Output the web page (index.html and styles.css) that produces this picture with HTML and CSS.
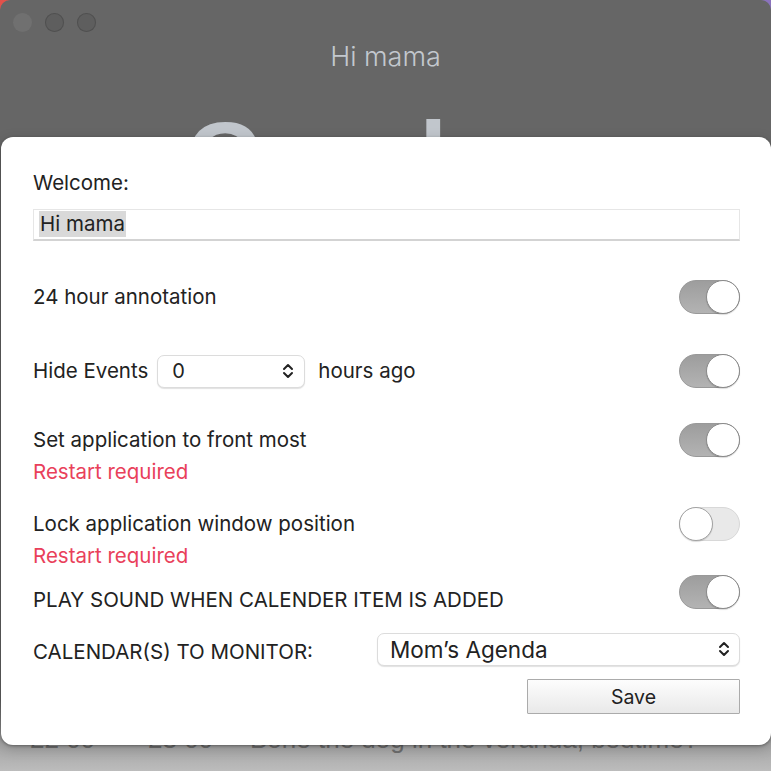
FILE: index.html
```html
<!DOCTYPE html>
<html lang="en">
<head>
  <meta charset="UTF-8">
  <meta name="viewport" content="width=device-width, initial-scale=1.0">
  <title>Hi mama</title>
  <link rel="stylesheet" href="styles.css">
</head>
<body>
  <div class="window">
    <div class="titlebar">
      <span class="light first"></span>
      <span class="light"></span>
      <span class="light"></span>
    </div>
    <div class="title">Hi mama</div>
    <div class="greeting">Good</div>

    <div class="events">
      <div class="event">
        <span class="event-from">22 00</span>
        <span class="event-to">23 00</span>
        <span class="event-name">Bone the dog in the veranda, bedtime?</span>
      </div>
    </div>

    <!-- settings sheet -->
    <div class="sheet">
      <div class="label">Welcome:</div>
      <div class="text-field"><span class="selected">Hi mama</span></div>

      <div class="row first-row">
        <span class="label">24 hour annotation</span>
        <span class="toggle on"><span class="knob"></span></span>
      </div>

      <div class="row hide-row">
        <div class="inline">
          <span class="label">Hide Events</span>
          <div class="select small">
            <span>0</span>
            <svg class="chevrons" width="12" height="16" viewBox="0 0 12 16"><path d="M2 6 L6 2 L10 6 M2 10 L6 14 L10 10" fill="none" stroke="#222" stroke-width="2" stroke-linecap="round" stroke-linejoin="round"/></svg>
          </div>
          <span class="label">hours ago</span>
        </div>
        <span class="toggle on"><span class="knob"></span></span>
      </div>

      <div class="row front-row">
        <span class="label">Set application to front most</span>
        <span class="toggle on"><span class="knob"></span></span>
      </div>
      <div class="note">Restart required</div>

      <div class="row lock-row">
        <span class="label">Lock application window position</span>
        <span class="toggle"><span class="knob"></span></span>
      </div>
      <div class="note">Restart required</div>

      <div class="row sound-row">
        <span class="label">PLAY SOUND WHEN CALENDER ITEM IS ADDED</span>
        <span class="toggle on"><span class="knob"></span></span>
      </div>

      <div class="row calendar-row">
        <span class="label">CALENDAR(S) TO MONITOR:</span>
        <div class="select wide">
          <span>Mom’s Agenda</span>
          <svg class="chevrons" width="12" height="16" viewBox="0 0 12 16"><path d="M2 6 L6 2 L10 6 M2 10 L6 14 L10 10" fill="none" stroke="#222" stroke-width="2" stroke-linecap="round" stroke-linejoin="round"/></svg>
        </div>
      </div>

      <div class="actions">
        <button class="save" type="button">Save</button>
      </div>
    </div>
  </div>
</body>
</html>
```

FILE: styles.css
```css
/* page */
html, body {
  margin: 0;
  height: 100%;
}

body {
  background: linear-gradient(90deg, #e2514a, #8a73bd);
  font-family: Inter, "Liberation Sans", Arial, sans-serif;
  color: #222;
  overflow: hidden;
}

/* main window behind the sheet */
.window {
  position: relative;
  height: 771px;
  border-radius: 10px 10px 0 0;
  background: linear-gradient(#666 0, #666 700px, #a6a6a6 745px, #bcbcbc 771px);
  display: flex;
  flex-direction: column;
  overflow: hidden;
}

.titlebar {
  height: 44px;
  display: flex;
  align-items: center;
  gap: 13px;
  padding-left: 13px;
  box-sizing: border-box;
}

.light {
  width: 19px;
  height: 19px;
  border-radius: 50%;
  background: #5e5e5e;
  box-shadow: inset 0 0 0 1px #505050;
}

.light.first {
  background: #707070;
  box-shadow: none;
}

.title {
  text-align: center;
  font-size: 27px;
  line-height: 28px;
  margin-top: -1px;
  font-weight: 300;
  color: #c3c8ce;
}

/* big greeting, mostly under the sheet */
.greeting {
  margin-top: 36px;
  padding-left: 186px;
  font-family: "Liberation Sans", Arial, sans-serif;
  font-size: 100px;
  line-height: 100px;
  font-weight: 700;
  color: #c1c6cc;
  white-space: nowrap;
}

.events {
  margin-top: auto;
  padding: 0 0 17px 30px;
}

.event {
  display: flex;
  font-family: "Liberation Sans", Arial, sans-serif;
  font-size: 26px;
  line-height: 30px;
  color: #6e6e6e;
  white-space: nowrap;
}

.event-from { width: 118px; }
.event-to { width: 102px; }

/* sheet */
.sheet {
  position: absolute;
  top: 137px;
  left: 1px;
  right: 0;
  height: 608px;
  box-sizing: border-box;
  padding: 34px 31px 0 32px;
  background: #fff;
  border-radius: 12px;
  box-shadow: 0 1px 3px rgba(0, 0, 0, 0.35), 0 4px 14px rgba(0, 0, 0, 0.18);
}

.label {
  font-size: 20.5px;
  line-height: 24px;
  white-space: nowrap;
}

.text-field {
  margin-top: 14px;
  height: 32px;
  box-sizing: border-box;
  border: 1px solid #e6e6e6;
  border-bottom: 2px solid #d3d3d3;
  padding: 1px 0 0 5px;
  font-size: 20.5px;
  line-height: 26px;
}

.selected {
  background: #d9d9d9;
  padding: 0 1px;
  display: inline-block;
}

.row {
  display: flex;
  align-items: center;
  justify-content: space-between;
  min-height: 34px;
}

.first-row { margin-top: 39px; }
.hide-row { margin-top: 40px; }
.front-row { margin-top: 35px; }
.lock-row { margin-top: 23px; }
.sound-row {
  margin-top: 7px;
  align-items: flex-start;
}
.sound-row .label { padding-top: 13px; }
.calendar-row { margin-top: 20px; }
.calendar-row .label { padding-top: 5px; }

.inline {
  display: flex;
  align-items: center;
}

.note {
  margin-top: 3px;
  font-size: 20.5px;
  line-height: 24px;
  color: #e9405a;
}

/* toggles */
.toggle {
  position: relative;
  width: 61px;
  height: 34px;
  box-sizing: border-box;
  border-radius: 17px;
  background: #e9e9e9;
  border: 1px solid #d8d8d8;
  flex-shrink: 0;
}

.toggle.on {
  background: linear-gradient(#9d9d9d, #b3b3b3);
  border-color: #999;
}

.knob {
  position: absolute;
  top: -1px;
  left: -1px;
  width: 34px;
  height: 34px;
  box-sizing: border-box;
  border-radius: 50%;
  background: #fff;
  border: 1px solid #a2a2a2;
  box-shadow: 0 1px 1px rgba(0, 0, 0, 0.15);
}

.toggle.on .knob {
  left: auto;
  right: -1px;
  border-color: #8a8a8a;
}

/* popup buttons */
.select {
  display: flex;
  align-items: center;
  justify-content: space-between;
  box-sizing: border-box;
  height: 33px;
  border: 1px solid #dcdcdc;
  border-radius: 7px;
  background: #fff;
  box-shadow: 0 1px 1px rgba(0, 0, 0, 0.12);
  font-size: 20px;
}

.select.small {
  width: 148px;
  margin: 0 13px 0 9px;
  padding: 0 10px 0 14px;
}

.select.wide {
  width: 363px;
  padding: 0 9px 0 12px;
  font-size: 22.5px;
}

.chevrons {
  display: block;
}

/* save */
.actions {
  display: flex;
  justify-content: flex-end;
  margin-top: 13px;
}

.save {
  width: 213px;
  height: 35px;
  border: 1px solid #ababab;
  border-radius: 1px;
  background: linear-gradient(#fdfdfd, #e9e9e9);
  font-family: Inter, "Liberation Sans", Arial, sans-serif;
  font-size: 19.5px;
  color: #222;
  padding: 0;
}
```
